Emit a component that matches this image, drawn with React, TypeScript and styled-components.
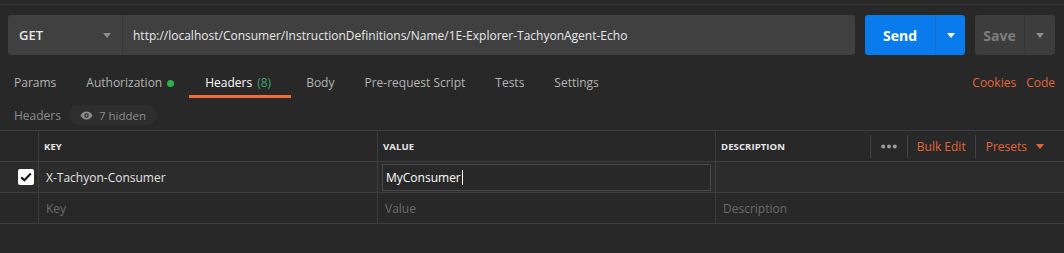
import React from 'react'
import styled, { createGlobalStyle } from 'styled-components'

const GlobalStyle = createGlobalStyle`
  html, body {
    margin: 0;
    padding: 0;
    background: #282828;
  }
  body {
    font-family: 'Open Sans', 'Liberation Sans', sans-serif;
    font-size: 12px;
    color: #d0d0d0;
  }
`

const Page = styled.div`
  width: 1064px;
  height: 253px;
  background: #282828;
  border-top: 1px solid #3a3a3a;
  margin-top: 4px;
  box-sizing: border-box;
  overflow: hidden;
`

const RequestBar = styled.div`
  display: flex;
  align-items: stretch;
  height: 40px;
  margin: 10px 9px 0 8px;
  gap: 10px;
`

const UrlGroup = styled.div`
  flex: 1;
  display: flex;
  background: #404040;
  border-radius: 3px;
`

const MethodSelect = styled.div`
  width: 115px;
  display: flex;
  align-items: center;
  justify-content: space-between;
  padding: 0 11px 0 11px;
  box-sizing: border-box;
  border-right: 1px solid #383838;
  font-size: 13px;
  font-weight: 600;
  color: #e6e6e6;
`

const Caret = styled.span<{ $color: string }>`
  width: 0;
  height: 0;
  border-left: 4px solid transparent;
  border-right: 4px solid transparent;
  border-top: 5px solid ${({ $color }) => $color};
`

const UrlText = styled.div`
  display: flex;
  align-items: center;
  padding-left: 10px;
  font-size: 12px;
  color: #e8e8e8;
`

const SplitButton = styled.div<{ $bg: string; $width: number }>`
  display: flex;
  width: ${({ $width }) => $width}px;
  background: ${({ $bg }) => $bg};
  border-radius: 3px;
`

const ButtonMain = styled.div<{ $color: string; $width: number; $divider: string }>`
  width: ${({ $width }) => $width}px;
  display: flex;
  align-items: center;
  justify-content: center;
  font-size: 14px;
  font-weight: 700;
  color: ${({ $color }) => $color};
  border-right: 1px solid ${({ $divider }) => $divider};
`

const ButtonArrow = styled.div`
  flex: 1;
  display: flex;
  align-items: center;
  justify-content: center;
`

const TabRow = styled.div`
  display: flex;
  align-items: flex-start;
  height: 29px;
  padding: 0 9px 0 14px;
  margin-top: 20px;
  box-sizing: border-box;
`

const Tab = styled.div<{ $active?: boolean; $gap: number }>`
  position: relative;
  margin-right: ${({ $gap }) => $gap}px;
  height: 23px;
  line-height: 16px;
  font-size: 12px;
  color: ${({ $active }) => ($active ? '#ffffff' : '#b4b4b4')};
  display: flex;
  align-items: flex-start;
  gap: 5px;
  ${({ $active }) =>
    $active &&
    `
    &::after {
      content: '';
      position: absolute;
      left: -16px;
      right: -20px;
      bottom: 0;
      height: 3px;
      background: #f26b3a;
    }
  `}
`

const Count = styled.span`
  color: #3aa371;
`

const Dot = styled.span`
  width: 7px;
  height: 7px;
  border-radius: 50%;
  background: #2bb24c;
  margin-top: 5px;
`

const Spacer = styled.div`
  flex: 1;
`

const OrangeLink = styled.span<{ $gap?: number }>`
  color: #e5653a;
  font-size: 12px;
  line-height: 16px;
  margin-left: ${({ $gap }) => $gap ?? 0}px;
`

const SubHeader = styled.div`
  display: flex;
  align-items: center;
  height: 22px;
  padding-left: 14px;
  gap: 8px;
  color: #8c8c8c;
  font-size: 12px;
`

const HiddenPill = styled.div`
  display: flex;
  align-items: center;
  gap: 6px;
  height: 20px;
  padding: 0 11px;
  border-radius: 10px;
  background: #2e2e2e;
  color: #8c8c8c;
  font-size: 11.5px;
`

const Table = styled.div`
  margin-top: 4px;
  border-top: 1px solid #3d3d3d;
`

const Row = styled.div<{ $bg?: string }>`
  display: grid;
  grid-template-columns: 38px 339px 338px 1fr;
  height: 31px;
  border-bottom: 1px solid #3d3d3d;
  background: ${({ $bg }) => $bg ?? '#282828'};
  box-sizing: border-box;
`

const Cell = styled.div<{ $muted?: boolean }>`
  display: flex;
  align-items: center;
  padding-left: 7px;
  border-left: 1px solid #3d3d3d;
  color: ${({ $muted }) => ($muted ? '#6b6b6b' : '#e2e2e2')};
  font-size: 12px;
  min-width: 0;
`

const HeadCell = styled(Cell)`
  padding-left: 5px;
  font-size: 9.5px;
  font-weight: 700;
  color: #e8e8e8;
  letter-spacing: 0.1px;
`

const CheckCell = styled.div`
  display: flex;
  align-items: center;
  justify-content: flex-end;
  padding-right: 4px;
`

const Checkbox = styled.div`
  width: 16px;
  height: 16px;
  border-radius: 2px;
  background: #ffffff;
  display: flex;
  align-items: center;
  justify-content: center;
`

const ValueInput = styled.div`
  flex: 1;
  height: 25px;
  margin: 0 4px 0 -3px;
  border: 1px solid #484848;
  background: #282828;
  display: flex;
  align-items: center;
  padding-left: 3px;
  color: #ffffff;
`

const CursorBar = styled.span`
  display: inline-block;
  width: 1px;
  height: 15px;
  background: #ffffff;
  margin-left: 1px;
`

const DescHead = styled(HeadCell)`
  justify-content: space-between;
  padding-right: 0;
`

const Actions = styled.div`
  display: flex;
  align-items: center;
  height: 100%;
`

const ActionItem = styled.div<{ $pad: string }>`
  display: flex;
  align-items: center;
  gap: 9px;
  height: 23px;
  padding: ${({ $pad }) => $pad};
  border-left: 1px solid #444444;
  color: #e5653a;
  font-size: 12px;
  font-weight: 400;
  letter-spacing: 0;
`

const Dots = () => (
  <svg width="16" height="5" viewBox="0 0 16 5">
    <circle cx="2.2" cy="2.5" r="2" fill="#9a9a9a" />
    <circle cx="8" cy="2.5" r="2" fill="#9a9a9a" />
    <circle cx="13.8" cy="2.5" r="2" fill="#9a9a9a" />
  </svg>
)

const Eye = () => (
  <svg width="13" height="9" viewBox="0 0 13 9">
    <path d="M6.5 0.5C3.6 0.5 1.4 2.5 0.5 4.5c0.9 2 3.1 4 6 4s5.1-2 6-4c-0.9-2-3.1-4-6-4z" fill="#8c8c8c" />
    <circle cx="6.5" cy="4.5" r="2.2" fill="#2e2e2e" />
    <circle cx="6.5" cy="4.5" r="1.1" fill="#8c8c8c" />
  </svg>
)

const Check = () => (
  <svg width="12" height="10" viewBox="0 0 12 10">
    <path d="M1.2 5.2 4.4 8.2 10.8 1.6" fill="none" stroke="#1a1a1a" strokeWidth="2.2" />
  </svg>
)

const tabs = [
  { label: 'Params', gap: 30 },
  { label: 'Authorization', gap: 31, dot: true },
  { label: 'Headers', gap: 35, count: '(8)', active: true },
  { label: 'Body', gap: 30 },
  { label: 'Pre-request Script', gap: 30 },
  { label: 'Tests', gap: 30 },
  { label: 'Settings', gap: 30 },
]

export default function App() {
  return (
    <>
      <GlobalStyle />
      <Page>
        <RequestBar>
          <UrlGroup>
            <MethodSelect>
              GET
              <Caret $color="#8f8f8f" />
            </MethodSelect>
            <UrlText>http://localhost/Consumer/InstructionDefinitions/Name/1E-Explorer-TachyonAgent-Echo</UrlText>
          </UrlGroup>
          <SplitButton $bg="#097bed" $width={100}>
            <ButtonMain $color="#ffffff" $width={70} $divider="#0a6ed2">
              Send
            </ButtonMain>
            <ButtonArrow>
              <Caret $color="#ffffff" />
            </ButtonArrow>
          </SplitButton>
          <SplitButton $bg="#3d3d3d" $width={80}>
            <ButtonMain $color="#7d7d7d" $width={49} $divider="#353535">
              Save
            </ButtonMain>
            <ButtonArrow>
              <Caret $color="#8f8f8f" />
            </ButtonArrow>
          </SplitButton>
        </RequestBar>

        <TabRow>
          {tabs.map((t) => (
            <Tab key={t.label} $active={t.active} $gap={t.gap}>
              {t.label}
              {t.dot && <Dot />}
              {t.count && <Count>{t.count}</Count>}
            </Tab>
          ))}
          <Spacer />
          <OrangeLink>Cookies</OrangeLink>
          <OrangeLink $gap={10}>Code</OrangeLink>
        </TabRow>

        <SubHeader>
          Headers
          <HiddenPill>
            <Eye />7 hidden
          </HiddenPill>
        </SubHeader>

        <Table>
          <Row>
            <div />
            <HeadCell>KEY</HeadCell>
            <HeadCell>VALUE</HeadCell>
            <DescHead>
              DESCRIPTION
              <Actions>
                <ActionItem $pad="0 10px 0 10px">
                  <Dots />
                </ActionItem>
                <ActionItem $pad="0 9px 0 9px">Bulk Edit</ActionItem>
                <ActionItem $pad="0 20px 0 10px">
                  Presets
                  <Caret $color="#e5653a" />
                </ActionItem>
              </Actions>
            </DescHead>
          </Row>
          <Row $bg="#2c2c2c">
            <CheckCell>
              <Checkbox>
                <Check />
              </Checkbox>
            </CheckCell>
            <Cell>X-Tachyon-Consumer</Cell>
            <Cell>
              <ValueInput>
                MyConsumer
                <CursorBar />
              </ValueInput>
            </Cell>
            <Cell />
          </Row>
          <Row>
            <div />
            <Cell $muted>Key</Cell>
            <Cell $muted>Value</Cell>
            <Cell $muted>Description</Cell>
          </Row>
        </Table>
      </Page>
    </>
  )
}
